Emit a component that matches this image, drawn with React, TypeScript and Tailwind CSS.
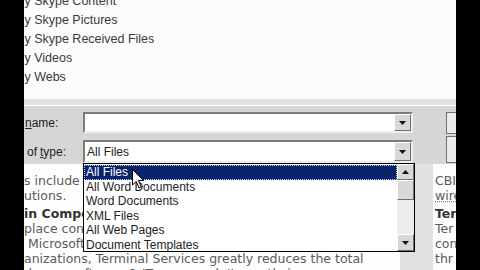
const ui = { fontFamily: '"Liberation Sans", Arial, sans-serif' }
const doc = { fontFamily: '"DejaVu Sans", Verdana, sans-serif' }

const folders = ['My Skype Content', 'My Skype Pictures', 'My Skype Received Files', 'My Videos', 'My Webs']

const fileTypes = [
  'All Files',
  'All Word Documents',
  'Word Documents',
  'XML Files',
  'All Web Pages',
  'Document Templates',
]

function Arrow({ up = false }: { up?: boolean }) {
  return (
    <svg width="7" height="4" viewBox="0 0 7 4" className={up ? 'rotate-180' : ''}>
      <path d="M0 0 H7 L3.5 4 Z" fill="#111" />
    </svg>
  )
}

function DropButton({ className = '' }: { className?: string }) {
  return (
    <div
      className={`flex items-center justify-center border border-t-white border-l-white border-r-[#6f6f6f] border-b-[#6f6f6f] bg-[#d8d8d8] ${className}`}
    >
      <Arrow />
    </div>
  )
}

export default function App() {
  return (
    <div className="flex h-[270px] w-[480px] overflow-hidden bg-black" style={ui}>
      <div className="w-[24px] shrink-0 bg-black" />

      <div className="relative flex w-[432px] shrink-0 flex-col overflow-hidden">
        {/* folder list */}
        <div className="h-[99px] shrink-0 overflow-hidden bg-[#fcfcfc]">
          <ul className="-ml-[10px] -mt-[8px] text-[12.5px] text-[#3a3a3a]">
            {folders.map((name) => (
              <li key={name} className="h-[19px] leading-[19px]">
                {name}
              </li>
            ))}
          </ul>
        </div>

        {/* dialog fields */}
        <div className="flex h-[65px] shrink-0 flex-col bg-[#d6d6d6] text-[12px] text-[#222]">
          <div className="h-[7px] border-b border-white bg-[#e2e2e2]" />
          <div className="mt-[6px] flex h-[21px] items-center">
            <div className="w-[59px] pl-[1px]">
              <span className="underline">n</span>ame:
            </div>
            <div className="flex h-[21px] w-[330px] justify-end border-2 border-t-[#7c7c7c] border-l-[#7c7c7c] border-r-[#eeeeee] border-b-[#eeeeee] bg-white">
              <DropButton className="h-[17px] w-[17px]" />
            </div>
            <div className="w-[33px]" />
            <div className="h-[22px] w-[10px] border border-r-0 border-[#707070] bg-[#ebebeb]" />
          </div>
          <div className="mt-[3px] flex h-[27px] items-end">
            <div className="flex h-[23px] w-[59px] items-center pl-[3px]">
              of <span className="ml-[3px] underline">t</span>ype:
            </div>
            <div className="flex h-[23px] w-[330px] items-center justify-between border-2 border-t-[#7c7c7c] border-l-[#7c7c7c] border-r-[#eeeeee] border-b-[#eeeeee] bg-white">
              <span className="pl-[2px]">All Files</span>
              <DropButton className="h-[19px] w-[17px]" />
            </div>
            <div className="w-[33px]" />
            <div className="h-[27px] w-[10px] border border-r-0 border-[#707070] bg-[#ebebeb]" />
          </div>
        </div>

        {/* page behind the dialog */}
        <div className="flex flex-1 text-[12.5px] leading-[15px]" style={doc}>
          <div className="w-[376px] overflow-hidden whitespace-nowrap bg-[#fdfdfd] pt-[9px] text-[#5a5a5a]">
            <p>s include Desktop Publishing</p>
            <p>utions.</p>
            <p className="mt-[3px] font-bold text-[#333]">in Components</p>
            <p>place conventional desktops</p>
            <p className="pl-[4px]">Microsoft Windows based</p>
            <p>anizations, Terminal Services greatly reduces the total</p>
            <p>dware, software &amp; IT personnel. It greatly increases</p>
          </div>
          <div className="w-[33px] bg-[#e1e1e1]" />
          <div className="w-[23px] overflow-hidden whitespace-nowrap bg-[#fdfdfd] pl-[2px] pt-[9px] text-[#5a5a5a]">
            <p>CBI</p>
            <p className="underline decoration-dotted decoration-[#6a9a6a]">wire</p>
            <p className="mt-[3px] font-bold text-[#333]">Ter</p>
            <p>Ter</p>
            <p>con</p>
            <p>thr</p>
            <p>acc</p>
          </div>
        </div>

        {/* open file type list */}
        <div className="absolute left-[59px] top-[163px] flex h-[89px] w-[332px] border border-black bg-white text-[12px] text-[#222]">
          <ul className="flex-1 pt-[1px]">
            {fileTypes.map((t, i) => (
              <li
                key={t}
                className={
                  i === 0
                    ? 'h-[14.5px] border border-dotted border-[#c8c8ff] bg-[#0a246a] pl-[1px] leading-[12.5px] text-white'
                    : 'h-[14.5px] pl-[2px] leading-[14.5px]'
                }
              >
                {t}
              </li>
            ))}
          </ul>
          <div className="flex w-[17px] flex-col bg-[#ececec]">
            <div className="flex h-[16px] items-center justify-center border border-t-white border-l-white border-r-[#6f6f6f] border-b-[#6f6f6f] bg-[#d8d8d8]">
              <Arrow up />
            </div>
            <div className="h-[20px] border border-t-white border-l-white border-r-[#6f6f6f] border-b-[#6f6f6f] bg-[#d8d8d8]" />
            <div className="flex-1" />
            <div className="flex h-[17px] items-center justify-center border border-t-white border-l-white border-r-[#6f6f6f] border-b-[#6f6f6f] bg-[#d8d8d8]">
              <Arrow />
            </div>
          </div>
        </div>

        {/* mouse pointer */}
        <svg className="absolute left-[108px] top-[169px]" width="13" height="21" viewBox="0 0 13 21">
          <path
            d="M0.5 0.5 L0.5 16 L4.2 12.4 L7 19 L9.2 18 L6.5 11.5 L11.5 11.5 Z"
            fill="white"
            stroke="black"
            strokeWidth="1"
          />
        </svg>
      </div>

      <div className="w-[24px] shrink-0 bg-black" />
    </div>
  )
}
